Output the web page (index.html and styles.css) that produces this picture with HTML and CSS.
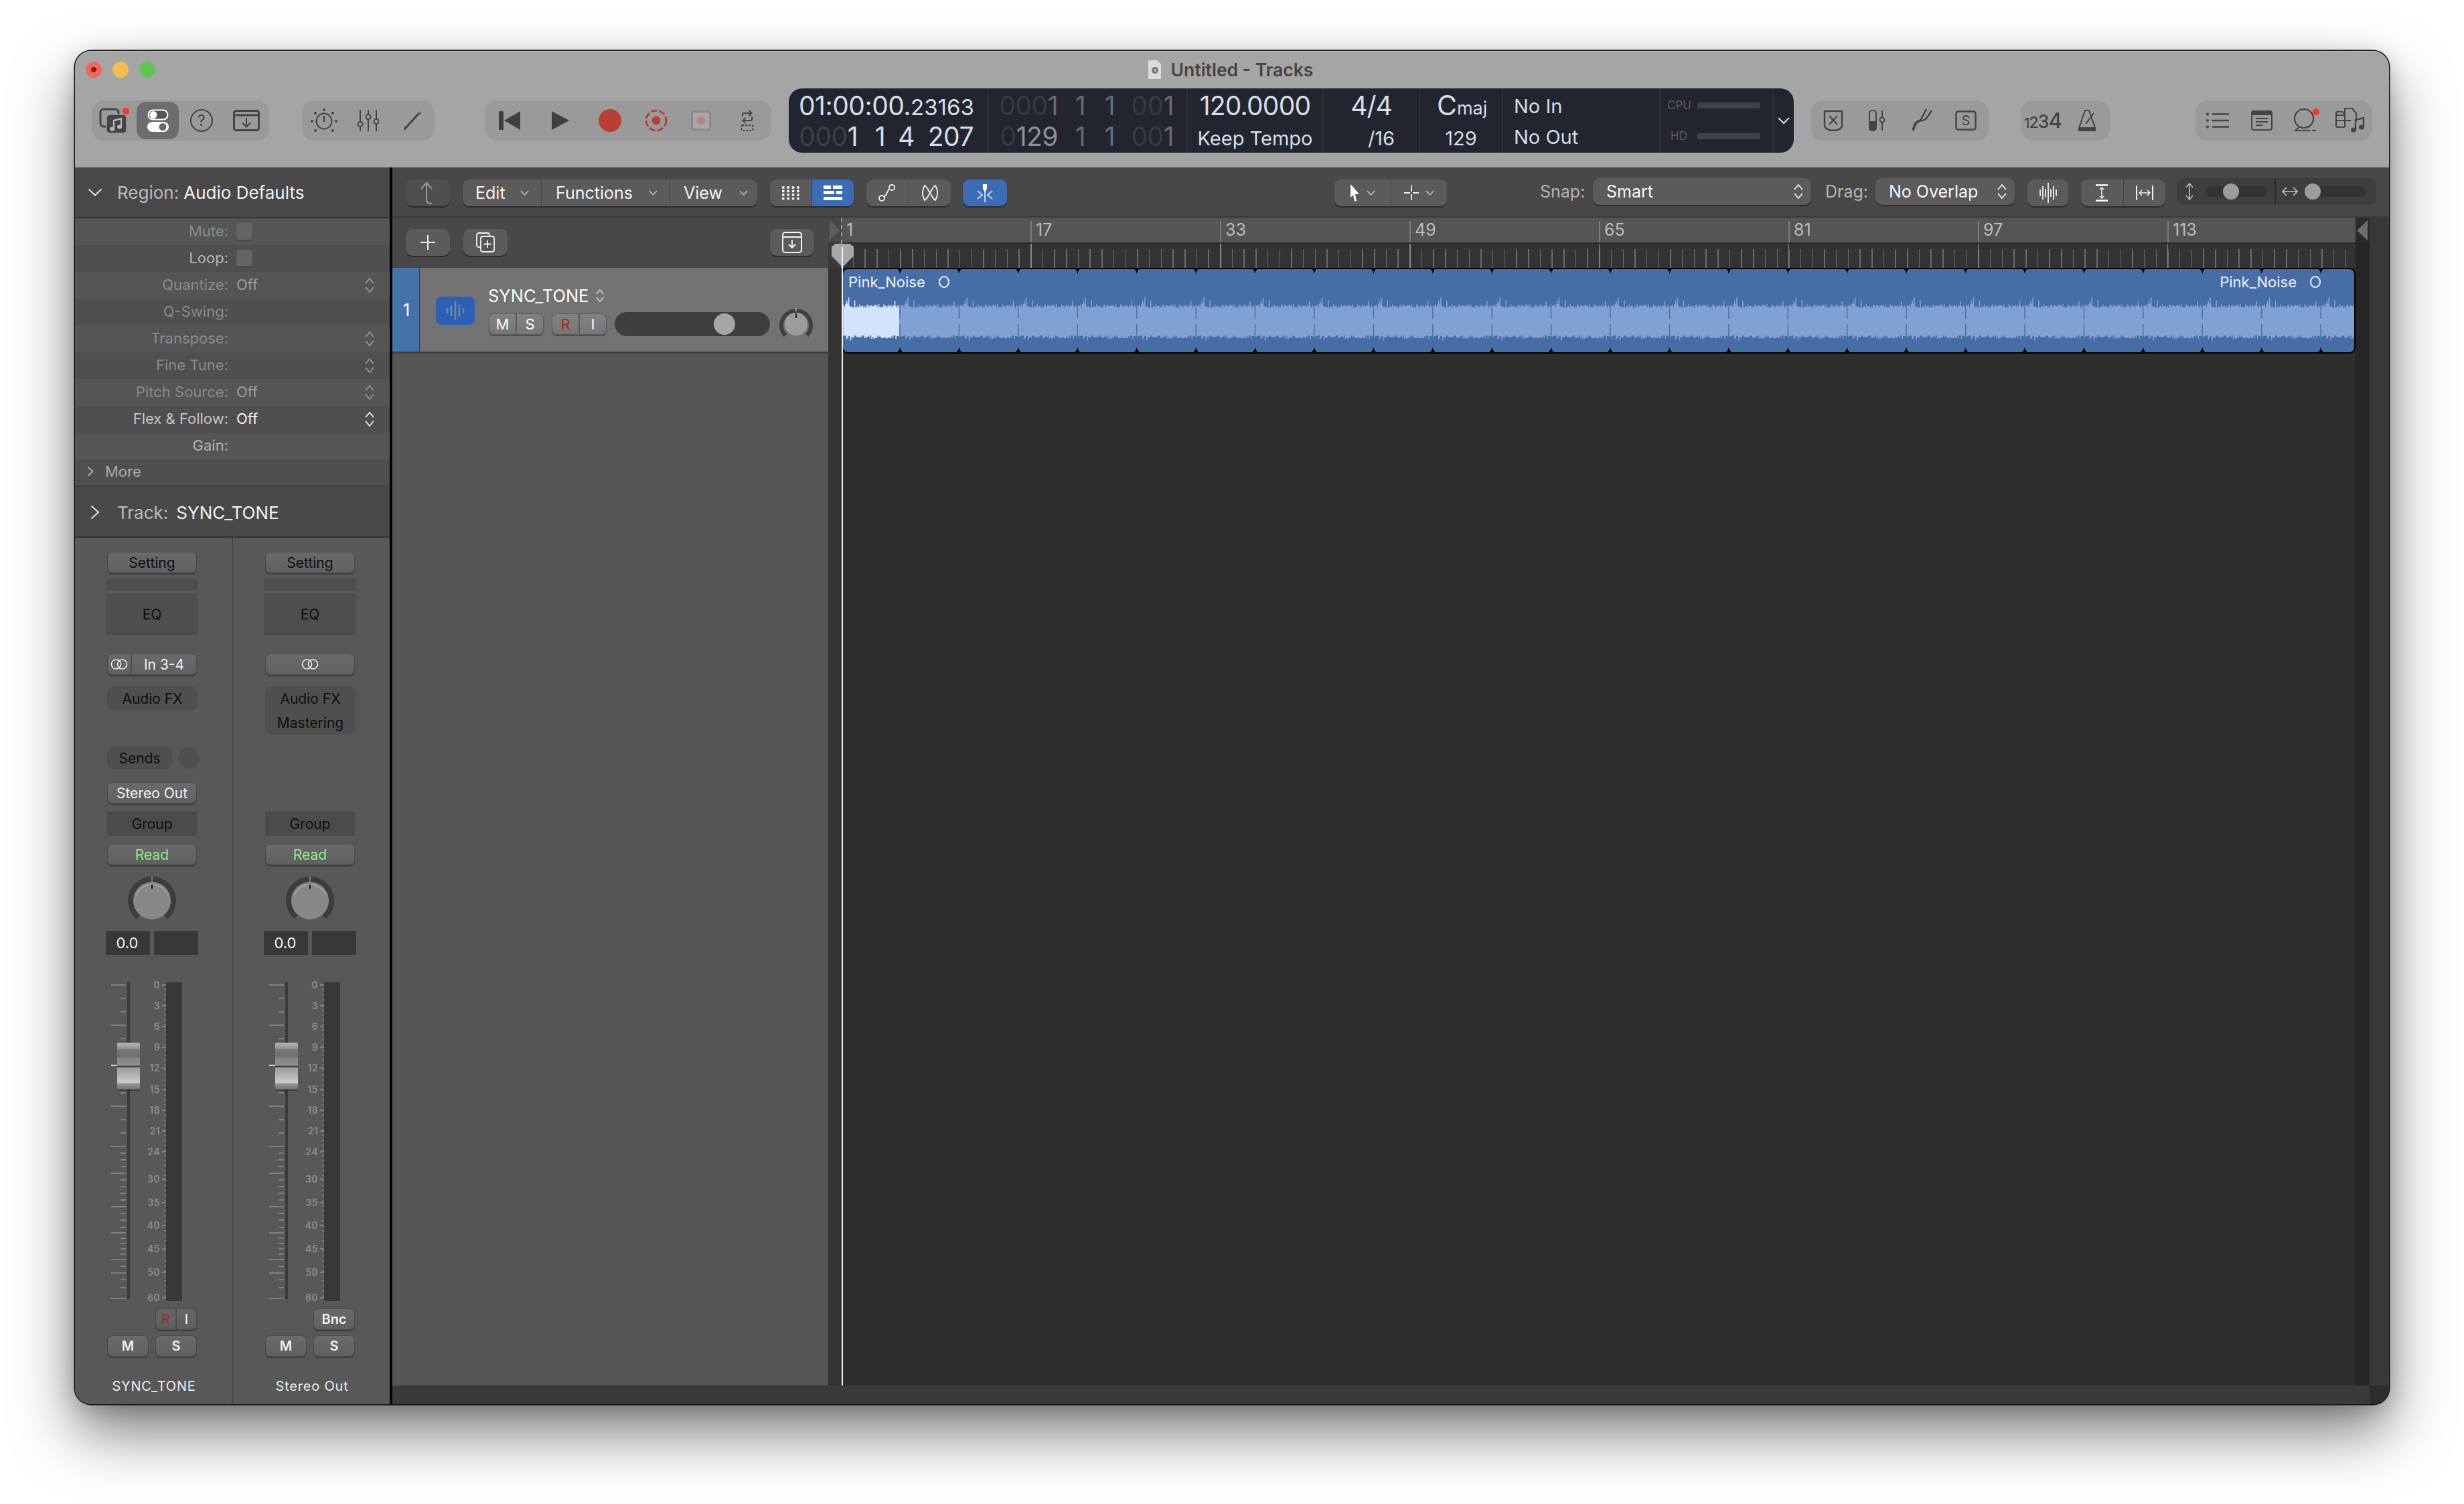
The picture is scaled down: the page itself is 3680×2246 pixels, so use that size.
FILE: index.html
```html
<!DOCTYPE html>
<html lang="en">
<head>
<meta charset="utf-8">
<title>Untitled - Tracks</title>
<link rel="stylesheet" href="styles.css">
</head>
<body>
<svg class="defs" width="0" height="0" aria-hidden="true"><defs>
<linearGradient id="capg" x1="0" y1="0" x2="0" y2="1">
<stop offset="0" stop-color="#b4b6b4"/><stop offset=".14" stop-color="#8e908e"/><stop offset=".15" stop-color="#777"/><stop offset=".3" stop-color="#6f706f"/><stop offset=".31" stop-color="#808180"/><stop offset=".49" stop-color="#8e8f8e"/><stop offset=".5" stop-color="#3a3a3a"/><stop offset=".52" stop-color="#3a3a3a"/><stop offset=".53" stop-color="#9a9b9a"/><stop offset=".82" stop-color="#c6c8c6"/><stop offset=".86" stop-color="#c6c8c6"/><stop offset=".87" stop-color="#999"/><stop offset="1" stop-color="#6f706f"/>
</linearGradient>
</defs></svg>
<main class="window">
  <header class="titlebar">
    <div class="titlerow">
      <div class="lights"><i class="light red"><b></b></i><i class="light yellow"></i><i class="light green"></i></div>
      <div class="wintitle">
        <svg class="docicon" viewBox="0 0 20 28"><path d="M1 0h12l6 6v21a1 1 0 0 1-1 1H1a1 1 0 0 1-1-1V1a1 1 0 0 1 1-1z" fill="#dcdcdc"/><circle cx="10" cy="15" r="5" fill="#777"/><circle cx="10" cy="15" r="2" fill="#bbb"/></svg>
        <span>Untitled - Tracks</span>
      </div>
    </div>
    <div class="toolbar">
      <div class="tgroup g-a">
        <div class="tb"><svg width="46" height="40" viewBox="0 0 46 40"><rect x="2" y="3" width="27" height="26" rx="5" fill="none" stroke="#444" stroke-width="3"/><rect x="11" y="11" width="30" height="28" rx="5" fill="#444" stroke="#9c9c9c" stroke-width="1.5"/><path d="M22 32V20l11-3v12" fill="none" stroke="#b9b9b9" stroke-width="2.4"/><ellipse cx="19.5" cy="32.500" rx="3.500" ry="3" fill="#b9b9b9"/><ellipse cx="30.500" cy="29.500" rx="3.500" ry="3" fill="#b9b9b9"/><circle cx="40" cy="6" r="5" fill="#f2392c"/></svg></div>
        <div class="tb active"><svg width="32" height="34" viewBox="0 0 32 34"><rect x="1.500" y="1.500" width="29" height="14" rx="7" fill="#555" stroke="#fff" stroke-width="2"/><circle cx="9" cy="8.500" r="5.500" fill="#fff"/><rect x="0" y="19" width="32" height="15" rx="7.500" fill="#fff"/><circle cx="23" cy="26.500" r="5.500" fill="#666"/></svg></div>
        <div class="tb"><svg width="34" height="36" viewBox="0 0 34 36"><circle cx="17" cy="18" r="16" fill="none" stroke="#444" stroke-width="2"/><text x="17" y="26" text-anchor="middle" class="qmark">?</text></svg></div>
        <div class="tb"><svg width="40" height="32" viewBox="0 0 40 32"><rect x="1.500" y="1.500" width="37" height="29" rx="3" fill="none" stroke="#444" stroke-width="3"/><path d="M2 8h36" stroke="#444" stroke-width="3"/><path d="M20 12v13M14 19.500l6 6 6-6" fill="none" stroke="#444" stroke-width="2"/></svg></div>
      </div>
      <div class="tgroup g-b">
        <div class="tb"><svg width="42" height="36" viewBox="0 0 42 36"><circle cx="21" cy="19" r="11.500" fill="none" stroke="#444" stroke-width="2"/><path d="M21 11v9" stroke="#444" stroke-width="2.500"/><g fill="#444"><circle cx="21" cy="2" r="2"/><circle cx="8" cy="7" r="2"/><circle cx="34" cy="7" r="2"/><circle cx="3" cy="19" r="2"/><circle cx="39" cy="19" r="2"/><circle cx="8" cy="33" r="2"/><circle cx="34" cy="33" r="2"/></g></svg></div>
        <div class="tb"><svg width="34" height="32" viewBox="0 0 34 32"><path d="M5 0v32M17 0v32M29 0v32" stroke="#444" stroke-width="2"/><g fill="#a0a0a0" stroke="#444" stroke-width="2"><rect x="1.500" y="18" width="7" height="7" rx="3.500"/><rect x="13.500" y="7" width="7" height="7" rx="3.500"/><rect x="25.500" y="14" width="7" height="7" rx="3.500"/></g></svg></div>
        <div class="tb"><svg width="28" height="30" viewBox="0 0 28 30"><path d="M2 28L24 4" stroke="#444" stroke-width="3"/><path d="M1 30l1-5 3 2zM24 4l3-3-1 5z" fill="#444"/></svg></div>
      </div>
      <div class="tgroup g-c">
        <div class="tb"><svg width="32" height="28" viewBox="0 0 32 28"><rect width="7" height="28" rx="1.500" fill="#3f3f3f"/><path d="M32 0v28L8 14z" fill="#3f3f3f"/></svg></div>
        <div class="tb"><svg width="26" height="28" viewBox="0 0 26 28"><path d="M0 0l26 14L0 28z" fill="#3f3f3f"/></svg></div>
        <div class="tb"><svg width="34" height="34" viewBox="0 0 34 34"><circle cx="17" cy="17" r="17" fill="#b83f31"/></svg></div>
        <div class="tb"><svg width="34" height="34" viewBox="0 0 34 34"><circle cx="17" cy="17" r="15" fill="none" stroke="#b83f31" stroke-width="3" stroke-dasharray="9 3.500"/><circle cx="17" cy="17" r="6.500" fill="#b83f31"/></svg></div>
        <div class="tb"><svg width="30" height="30" viewBox="0 0 30 30"><rect x="1.500" y="1.500" width="27" height="27" rx="3" fill="#a8a8a8" stroke="#8a8a8a" stroke-width="3"/><circle cx="15" cy="15" r="6.500" fill="#b88583"/></svg></div>
        <div class="tb"><svg width="20" height="32" viewBox="0 0 20 32"><path d="M3 10V7a2 2 0 0 1 2-2h11M12.500 1l4 4-4 4M17 10v4a2 2 0 0 1-2 2H4M7.500 12l-4 4 4 4" fill="none" stroke="#444" stroke-width="2"/><rect x="1.500" y="23" width="17" height="8" rx="1" fill="none" stroke="#444" stroke-width="2" stroke-dasharray="3 2"/></svg></div>
      </div>
      <div class="lcd">
        <div class="lcell c1">
          <div class="lrow lead">01:00:00.<small>23163</small></div>
          <div class="lrow counter"><span><u>000</u>1</span><span>1</span><span>4</span><span>207</span></div>
        </div>
        <div class="lcell c2">
          <div class="lrow counter mid"><span><u>000</u>1</span><span>1</span><span>1</span><span><u>00</u>1</span></div>
          <div class="lrow counter mid"><span><u>0</u><em>129</em></span><span>1</span><span>1</span><span><u>00</u>1</span></div>
        </div>
        <div class="lcell c3">
          <div class="lrow big center">120.0000</div>
          <div class="lrow sub center">Keep Tempo</div>
        </div>
        <div class="lcell c4">
          <div class="lrow big center">4/4</div>
          <div class="lrow sub center shift">/16</div>
        </div>
        <div class="lcell c5">
          <div class="lrow big key">C<small>maj</small></div>
          <div class="lrow sub center">129</div>
        </div>
        <div class="lcell c6">
          <div class="lrow sub">No In</div>
          <div class="lrow sub">No Out</div>
        </div>
        <div class="lcell c7">
          <div class="lrow perf"><span>CPU</span><i></i></div>
          <div class="lrow perf"><span>HD</span><i></i></div>
        </div>
        <div class="lcell c8"><svg class="chev lcdchev" viewBox="0 0 20 12"><path d="M2 2l8 8 8-8"/></svg></div>
      </div>
      <div class="tgroup g-d">
        <div class="tb"><svg width="30" height="32" viewBox="0 0 30 32"><path d="M2 2h26v21c0 5-6 8-13 8S2 28 2 23z" fill="none" stroke="#444" stroke-width="2.500"/><path d="M9 9l12 13M21 9L9 22" stroke="#444" stroke-width="2"/></svg></div>
        <div class="tb"><svg width="26" height="32" viewBox="0 0 26 32"><rect x="1" y="1" width="10" height="30" rx="4" fill="none" stroke="#444" stroke-width="2"/><path d="M1 17h10v10a4 4 0 0 1-4 4H5a4 4 0 0 1-4-4z" fill="#444"/><path d="M20 1v30" stroke="#444" stroke-width="2"/><circle cx="20" cy="15" r="3.500" fill="#a0a0a0" stroke="#444" stroke-width="2"/></svg></div>
        <div class="tb"><svg width="36" height="36" viewBox="0 0 36 36"><path d="M5 33L8 24c2-4 5-5 8-6" fill="none" stroke="#444" stroke-width="3.500"/><path d="M16 18L25 1M16 18c4 1 9-2 11-6l6-9" fill="none" stroke="#444" stroke-width="2.500"/></svg></div>
        <div class="tb"><svg width="32" height="30" viewBox="0 0 32 30"><rect x="1.500" y="1.500" width="29" height="27" rx="3" fill="none" stroke="#444" stroke-width="2.500"/><text x="16" y="22" text-anchor="middle" class="iconletter">S</text></svg></div>
      </div>
      <div class="tgroup g-e">
        <div class="tb count"><span class="d1">1</span><span class="d2">2</span><span class="d3">3</span><span class="d4">4</span></div>
        <div class="tb"><svg width="32" height="34" viewBox="0 0 32 34"><path d="M13 2h6l9 26H4z" fill="none" stroke="#444" stroke-width="2"/><path d="M3 28h26v5H3z" fill="#444"/><path d="M14 22L26 6" stroke="#444" stroke-width="2"/></svg></div>
      </div>
      <div class="tgroup g-f">
        <div class="tb"><svg width="34" height="24" viewBox="0 0 34 24"><path d="M9 2.500h25M9 12h25M9 21.500h25" stroke="#444" stroke-width="2.500"/><circle cx="2" cy="2.500" r="2" fill="#444"/><circle cx="2" cy="12" r="2" fill="#444"/><circle cx="2" cy="21.500" r="2" fill="#444"/></svg></div>
        <div class="tb"><svg width="32" height="30" viewBox="0 0 32 30"><rect x="1" y="1" width="30" height="28" rx="3" fill="none" stroke="#444" stroke-width="2"/><path d="M1 4a3 3 0 0 1 3-3h24a3 3 0 0 1 3 3v3H1z" fill="#444"/><path d="M7 12h18M7 17h18M7 22h11" stroke="#444" stroke-width="2"/></svg></div>
        <div class="tb loopbtn"><svg width="40" height="36" viewBox="0 0 40 36"><ellipse cx="17" cy="15" rx="14" ry="14" fill="none" stroke="#444" stroke-width="2.200"/><path d="M3 33h32" stroke="#444" stroke-width="2.200" stroke-dasharray="23 3"/><path d="M10 28l-6 5" stroke="#444" stroke-width="2.200"/><circle cx="35" cy="5" r="5" fill="#f2392c"/></svg></div>
        <div class="tb"><svg width="46" height="38" viewBox="0 0 46 38"><path d="M2 11h13M2 8a2 2 0 0 1 2-2h8l3 5v16a2 2 0 0 1-2 2H4a2 2 0 0 1-2-2z" fill="none" stroke="#444" stroke-width="2"/><path d="M15 22V1h11l6 7v12" fill="none" stroke="#444" stroke-width="2"/><path d="M2 19h22" stroke="#444" stroke-width="2"/><path d="M31 32V18l12-3v13" fill="none" stroke="#444" stroke-width="2.500"/><ellipse cx="28" cy="33" rx="4" ry="3.500" fill="#444"/><ellipse cx="40" cy="29" rx="4" ry="3.500" fill="#444"/></svg></div>
      </div>
    </div>
  </header>

  <div class="workspace">
    <aside class="inspector">
      <div class="ihead">
        <svg class="chev ichev" viewBox="0 0 22 12"><path d="M1.500 1.500L11 10.500l9.500-9"/></svg>
        <span class="ilabel">Region:</span><strong>Audio Defaults</strong>
      </div>
      <div class="irows">
        <div class="irow"><label class="dim">Mute:</label><i class="check"></i></div>
        <div class="irow"><label class="mid">Loop:</label><i class="check"></i></div>
        <div class="irow"><label class="dim">Quantize:</label><span class="dimval">Off</span><svg class="step" viewBox="0 0 16 24"><path d="M2 9l6-7 6 7M2 15l6 7 6-7"/></svg></div>
        <div class="irow"><label class="dim">Q-Swing:</label></div>
        <div class="irow"><label class="dim">Transpose:</label><span></span><svg class="step" viewBox="0 0 16 24"><path d="M2 9l6-7 6 7M2 15l6 7 6-7"/></svg></div>
        <div class="irow"><label class="dim">Fine Tune:</label><span></span><svg class="step" viewBox="0 0 16 24"><path d="M2 9l6-7 6 7M2 15l6 7 6-7"/></svg></div>
        <div class="irow"><label class="dim">Pitch Source:</label><span class="dimval">Off</span><svg class="step" viewBox="0 0 16 24"><path d="M2 9l6-7 6 7M2 15l6 7 6-7"/></svg></div>
        <div class="irow"><label class="on">Flex &amp; Follow:</label><span class="onval">Off</span><svg class="step onstep" viewBox="0 0 16 24"><path d="M2 9l6-7 6 7M2 15l6 7 6-7"/></svg></div>
        <div class="irow"><label class="mid">Gain:</label></div>
        <div class="irow more"><svg class="morechev" viewBox="0 0 10 16"><path d="M1.500 1.500L8.500 8l-7 6.500"/></svg><span>More</span></div>
      </div>
      <div class="ihead trackhead">
        <svg class="tchev" viewBox="0 0 14 22"><path d="M1.500 1.500L12 11 1.500 20.500"/></svg>
        <span class="ilabel">Track:</span><strong>SYNC_TONE</strong>
      </div>
      <div class="mixer">
        <section class="strip first">
          <button class="btn setting">Setting</button>
          <div class="eqthin"></div>
          <div class="eq">EQ</div>
          <div class="btn inputbtn"><span class="link"><svg width="26" height="16" viewBox="0 0 26 16"><circle cx="8.500" cy="8" r="7" fill="none" stroke="#eee" stroke-width="1.600"/><circle cx="17.500" cy="8" r="7" fill="none" stroke="#eee" stroke-width="1.600"/></svg></span><span class="inname">In 3-4</span></div>
          <div class="fxslot"><div class="fx"><span>Audio FX</span></div></div>
          <div class="sends"><span class="sendbtn">Sends</span><i class="senddot"></i></div>
          <button class="btn out">Stereo Out</button>
          <div class="group">Group</div>
          <button class="btn read">Read</button>
          <svg class="knob" width="72" height="72" viewBox="0 0 72 72"><path d="M15.400 60.500A32 32 0 1 1 56.600 60.500" fill="none" stroke="#3c3c3c" stroke-width="8"/><circle cx="36" cy="36" r="28" fill="#888"/><path d="M12 28a26 26 0 0 1 48 0" fill="none" stroke="#bdbdbd" stroke-width="1"/><path d="M36 0v8" stroke="#7fdc7a" stroke-width="1"/><path d="M36 12v6" stroke="#111" stroke-width="2"/></svg>
          <div class="vals"><span>0.0</span><span></span></div>
          <svg class="fader" width="138" height="476" viewBox="0 0 138 476"><rect x="32" y="0" width="4" height="473" fill="#3a3a3a"/><path class="tk" d="M8 4h22M8 64h22M8 185h22M8 245h22M8 285h22M8 335h22M8 374h22M8 414h22M8 434h22M8 472h22M22 24h8M22 44h8M22 84h8M22 165h8M22 205h8M22 225h8M22 255h8M22 265h8M22 275h8M22 295h8M22 305h8M22 315h8M22 325h8M22 345h8M22 355h8M22 366h8M22 382h8M22 390h8M22 398h8M22 406h8M22 424h8M22 444h8M22 456h8"/><path class="tk" d="M84 4h6M84 35h6M84 66h6M84 97h6M84 128h6M84 160h6M84 191h6M84 222h6M84 253h6M84 294h6M84 329h6M84 363h6M84 398h6M84 433h6M84 471h6"/><path class="dots" d="M88.500 10V470"/><rect x="90" y="0" width="24" height="476" fill="#383838"/><path d="M8 124h9" stroke="#fff" stroke-width="1.500"/><rect x="17" y="92" width="34" height="70" rx="2" fill="#000" opacity=".3"/><rect x="17" y="90" width="34" height="70" rx="2" fill="url(#capg)"/><g class="sc"><text x="81" y="9">0</text><text x="81" y="40">3</text><text x="81" y="71">6</text><text x="81" y="102">9</text><text x="81" y="133">12</text><text x="81" y="165">15</text><text x="81" y="196">18</text><text x="81" y="227">21</text><text x="81" y="258">24</text><text x="81" y="299">30</text><text x="81" y="334">35</text><text x="81" y="368">40</text><text x="81" y="403">45</text><text x="81" y="438">50</text><text x="81" y="476">60</text></g></svg>
          <div class="ribtn"><div class="seg2 small"><span class="rec">R</span><span>I</span></div></div>
          <div class="msrow"><button class="btn ms">M</button><button class="btn ms">S</button></div>
          <div class="cname">SYNC_TONE</div>
        </section>
        <section class="strip">
          <button class="btn setting">Setting</button>
          <div class="eqthin"></div>
          <div class="eq">EQ</div>
          <div class="btn inputbtn center"><svg width="26" height="16" viewBox="0 0 26 16"><circle cx="8.500" cy="8" r="7" fill="none" stroke="#eee" stroke-width="1.600"/><circle cx="17.500" cy="8" r="7" fill="none" stroke="#eee" stroke-width="1.600"/></svg></div>
          <div class="fxslot"><div class="fx"><span>Audio FX</span><span>Mastering</span></div></div>
          <div class="sends"></div>
          <div class="outgap"></div>
          <div class="group">Group</div>
          <button class="btn read">Read</button>
          <svg class="knob" width="72" height="72" viewBox="0 0 72 72"><path d="M15.400 60.500A32 32 0 1 1 56.600 60.500" fill="none" stroke="#3c3c3c" stroke-width="8"/><circle cx="36" cy="36" r="28" fill="#888"/><path d="M12 28a26 26 0 0 1 48 0" fill="none" stroke="#bdbdbd" stroke-width="1"/><path d="M36 0v8" stroke="#7fdc7a" stroke-width="1"/><path d="M36 12v6" stroke="#111" stroke-width="2"/></svg>
          <div class="vals"><span>0.0</span><span></span></div>
          <svg class="fader" width="138" height="476" viewBox="0 0 138 476"><rect x="32" y="0" width="4" height="473" fill="#3a3a3a"/><path class="tk" d="M8 4h22M8 64h22M8 185h22M8 245h22M8 285h22M8 335h22M8 374h22M8 414h22M8 434h22M8 472h22M22 24h8M22 44h8M22 84h8M22 165h8M22 205h8M22 225h8M22 255h8M22 265h8M22 275h8M22 295h8M22 305h8M22 315h8M22 325h8M22 345h8M22 355h8M22 366h8M22 382h8M22 390h8M22 398h8M22 406h8M22 424h8M22 444h8M22 456h8"/><path class="tk" d="M84 4h6M84 35h6M84 66h6M84 97h6M84 128h6M84 160h6M84 191h6M84 222h6M84 253h6M84 294h6M84 329h6M84 363h6M84 398h6M84 433h6M84 471h6"/><path class="dots" d="M88.500 10V470"/><rect x="90" y="0" width="24" height="476" fill="#383838"/><path d="M8 124h9" stroke="#fff" stroke-width="1.500"/><rect x="17" y="92" width="34" height="70" rx="2" fill="#000" opacity=".3"/><rect x="17" y="90" width="34" height="70" rx="2" fill="url(#capg)"/><g class="sc"><text x="81" y="9">0</text><text x="81" y="40">3</text><text x="81" y="71">6</text><text x="81" y="102">9</text><text x="81" y="133">12</text><text x="81" y="165">15</text><text x="81" y="196">18</text><text x="81" y="227">21</text><text x="81" y="258">24</text><text x="81" y="299">30</text><text x="81" y="334">35</text><text x="81" y="368">40</text><text x="81" y="403">45</text><text x="81" y="438">50</text><text x="81" y="476">60</text></g></svg>
          <div class="ribtn"><button class="btn bnc">Bnc</button></div>
          <div class="msrow"><button class="btn ms">M</button><button class="btn ms">S</button></div>
          <div class="cname">Stereo Out</div>
        </section>
      </div>
    </aside>
    <div class="vdivider"></div>

    <div class="main">
      <div class="maintools">
        <div class="mb back"><svg width="26" height="36" viewBox="0 0 26 36"><path d="M11 3v25c0 4 3 6 8 6" fill="none" stroke="#9a9a9a" stroke-width="2"/><path d="M3 12l8-9 8 9" fill="none" stroke="#9a9a9a" stroke-width="2"/></svg></div>
        <div class="mb menus">
          <div class="cell m-edit"><span>Edit</span><svg class="chev mchev" viewBox="0 0 14 8"><path d="M1 1l6 6 6-6"/></svg></div>
          <div class="cell m-func"><span>Functions</span><svg class="chev mchev" viewBox="0 0 14 8"><path d="M1 1l6 6 6-6"/></svg></div>
          <div class="cell m-view"><span>View</span><svg class="chev mchev" viewBox="0 0 14 8"><path d="M1 1l6 6 6-6"/></svg></div>
        </div>
        <div class="mb seg w125">
          <div class="cell"><svg width="28" height="22" viewBox="0 0 28 22"><path d="M1 3h26M1 8.500h26M1 14h26M1 19.500h26" stroke="#f4f4f4" stroke-width="3.500" stroke-dasharray="3.500 3.900"/></svg></div>
          <div class="cell blue"><svg width="28" height="22" viewBox="0 0 28 22"><g fill="#fff"><rect width="11" height="5"/><rect x="14" width="14" height="5"/><rect y="8" width="16" height="5"/><rect x="19" y="8" width="9" height="5"/><rect y="17" width="28" height="5"/></g></svg></div>
        </div>
        <div class="mb seg w126">
          <div class="cell"><svg width="34" height="26" viewBox="0 0 34 26"><path d="M5 22l6-1c4-3 7-12 10-15l8-2" fill="none" stroke="#f0f0f0" stroke-width="1.800"/><circle cx="24" cy="5" r="4" fill="#555" stroke="#f0f0f0" stroke-width="1.800"/><circle cx="9" cy="21" r="4" fill="#555" stroke="#f0f0f0" stroke-width="1.800"/></svg></div>
          <div class="cell"><svg width="28" height="26" viewBox="0 0 26 26"><path d="M5 2C1 9 1 17 5 24 9 22 10 17 13 13 16 9 17 4 21 2 25 9 25 17 21 24 17 22 16 17 13 13 10 9 9 4 5 2Z" fill="none" stroke="#f0f0f0" stroke-width="1.800"/></svg></div>
        </div>
        <div class="mb blue flexbtn"><svg width="28" height="28" viewBox="0 0 28 28"><path d="M14 1v27" stroke="#fff" stroke-width="1.500"/><path d="M11 1h6v7l-3 5-3-5z" fill="#fff"/><path d="M3 11l7 6-7 6M25 11l-7 6 7 6" fill="none" stroke="#fff" stroke-width="1.500"/></svg></div>
        <div class="mb tools">
          <div class="cell t-a"><svg width="16" height="26" viewBox="0 0 16 26"><path d="M2 0l13 15H9l2 10-3 1-2-10-4 4z" fill="#fff"/></svg><svg class="chev mchev" viewBox="0 0 14 8"><path d="M1 1l6 6 6-6"/></svg></div>
          <div class="cell t-b"><svg width="22" height="22" viewBox="0 0 22 22"><path d="M11 0v9M11 13v9M0 11h9M13 11h9" stroke="#f0f0f0" stroke-width="1.800"/></svg><svg class="chev mchev" viewBox="0 0 14 8"><path d="M1 1l6 6 6-6"/></svg></div>
        </div>
        <span class="flabel snap">Snap:</span>
        <div class="sel s-snap"><span>Smart</span><svg class="step onstep" viewBox="0 0 16 24"><path d="M2 9l6-7 6 7M2 15l6 7 6-7"/></svg></div>
        <span class="flabel drag">Drag:</span>
        <div class="sel s-drag"><span>No Overlap</span><svg class="step onstep" viewBox="0 0 16 24"><path d="M2 9l6-7 6 7M2 15l6 7 6-7"/></svg></div>
        <div class="mb waveb"><svg width="26" height="30" viewBox="0 0 26 30"><path d="M1 10v10M5 5v20M9 9v12M13 0v30M17 9v12M21 5v20M25 10v10" stroke="#f0f0f0" stroke-width="1.800"/></svg></div>
        <div class="mb seg w126">
          <div class="cell"><svg width="20" height="26" viewBox="0 0 20 26"><path d="M1 1.500h18M1 24.500h18" stroke="#fff" stroke-width="2.500"/><path d="M10 5v16M7 8l3-3 3 3M7 18l3 3 3-3" fill="none" stroke="#f0f0f0" stroke-width="1.500"/></svg></div>
          <div class="cell"><svg width="28" height="22" viewBox="0 0 28 22"><path d="M2 0v22M26 0v22" stroke="#f0f0f0" stroke-width="2"/><path d="M7 11h14M10 7l-4 4 4 4M18 7l4 4-4 4" fill="none" stroke="#f0f0f0" stroke-width="1.500"/></svg></div>
        </div>
        <div class="zoomers">
          <div class="zcell zv"><svg width="14" height="26" viewBox="0 0 14 26"><path d="M7 1v24M2 7l5-6 5 6M2 19l5 6 5-6" fill="none" stroke="#bdbdbd" stroke-width="1.600"/></svg><div class="ztrack"><i></i></div></div>
          <div class="zcell zh"><svg width="24" height="16" viewBox="0 0 24 16"><path d="M1 8h22M7 2L1 8l6 6M17 2l6 6-6 6" fill="none" stroke="#bdbdbd" stroke-width="1.600"/></svg><div class="ztrack"><i></i></div></div>
        </div>
      </div>
      <div class="arrange">
        <div class="tracks">
          <div class="trackbar">
            <div class="mb sq"><svg width="24" height="24" viewBox="0 0 24 24"><path d="M12 1v22M1 12h22" stroke="#f0f0f0" stroke-width="2"/></svg></div>
            <div class="mb sq"><svg width="28" height="30" viewBox="0 0 28 30"><rect x="1" y="1" width="19" height="21" rx="3" fill="none" stroke="#f0f0f0" stroke-width="1.800"/><rect x="7" y="6" width="20" height="23" rx="3" fill="#555" stroke="#f0f0f0" stroke-width="1.800"/><path d="M17 12v11M11.500 17.500h11" stroke="#f0f0f0" stroke-width="1.800"/></svg></div>
            <div class="mb sq pushr"><svg width="30" height="32" viewBox="0 0 30 32"><rect x="1" y="1" width="28" height="30" rx="4" fill="none" stroke="#f6f6f6" stroke-width="2"/><path d="M1 8h28" stroke="#f6f6f6" stroke-width="2"/><path d="M15 12v12M10 19l5 5 5-5" fill="none" stroke="#f6f6f6" stroke-width="1.800"/></svg></div>
          </div>
          <div class="trackrow">
            <div class="tnum">1</div>
            <div class="ticon"><svg width="30" height="28" viewBox="0 0 30 28"><path d="M3 10v8M9 6v16M15 0v28M21 5v18M27 10v8" stroke="#7a8797" stroke-width="2.500"/></svg></div>
            <div class="tbody">
              <div class="tname">SYNC_TONE <svg class="step tstep" viewBox="0 0 16 24"><path d="M2 9l6-7 6 7M2 15l6 7 6-7"/></svg></div>
              <div class="tctrl">
                <div class="seg2"><span>M</span><span>S</span></div>
                <div class="seg2"><span class="rec">R</span><span>I</span></div>
                <div class="vol"><i></i></div>
                <svg class="tknob" width="50" height="50" viewBox="0 0 50 50"><path d="M9 42A22 22 0 1 1 41 42" fill="none" stroke="#404040" stroke-width="6"/><circle cx="25" cy="25" r="17" fill="#9d9d9d"/><path d="M25 1v5" stroke="#7fdc7a" stroke-width="1.500"/><path d="M25 9v7" stroke="#111" stroke-width="1.800"/></svg>
              </div>
            </div>
          </div>
        </div>
        <div class="timeline">
          <div class="gutter"><div class="gtop"><i></i></div><div class="gticks"></div></div>
          <div class="content">
            <div class="ruler">
              <span class="bar firstbar">1</span><span class="bar">17</span><span class="bar">33</span><span class="bar">49</span><span class="bar">65</span><span class="bar">81</span><span class="bar">97</span><span class="bar">113</span>
            </div>
            <div class="ticks"></div>
            <div class="region">
              <svg id="wave" class="wave" width="2262" height="127" viewBox="0 0 2262 127"></svg>
              <div class="rlabel"><span>Pink_Noise</span><i></i></div>
              <div class="rlabel"><span>Pink_Noise</span><i></i></div>
            </div>
          </div>
          <div class="endcol"><div class="etop"><i></i></div></div>
          <div class="vscroll"></div>
          <div class="playhead"><div class="phdash"></div><div class="phhead"></div><div class="phline"></div></div>
        </div>
      </div>
      <div class="hscroll"><i></i></div>
    </div>
  </div>
</main>
<script src="script.js"></script>
</body>
</html>
```
FILE: styles.css
```css
* { box-sizing: border-box; }
html, body { margin: 0; padding: 0; }
body {
  width: 3680px; height: 2246px; overflow: hidden; background: #fff;
  padding: 76px 112px 149px;
  font-family: Inter, "Liberation Sans", sans-serif;
  font-size: 22px; color: #eee;
}
.defs { position: absolute; }
button { font: inherit; padding: 0; margin: 0; }
i, u, em { font-style: normal; text-decoration: none; }

.window {
  width: 3456px; height: 2021px; border-radius: 24px; overflow: hidden;
  display: flex; flex-direction: column; background: #555;
  box-shadow: 0 0 0 1.500px #111, 0 42px 90px rgba(0,0,0,.52), 0 8px 30px rgba(0,0,0,.18);
}
/* title bar */
.titlebar { height: 174px; flex: none; background: #a5a5a5; box-shadow: inset 0 1.500px 0 #bdbdbd; }
.titlerow { height: 56px; position: relative; display: flex; align-items: center; justify-content: center; }
.lights { position: absolute; left: 16px; top: 16px; display: flex; gap: 16px; }
.light { width: 24px; height: 24px; border-radius: 50%; display: flex; align-items: center; justify-content: center; }
.light b { width: 8px; height: 8px; border-radius: 50%; background: #8c1f16; }
.red { background: #ee6a5f; } .yellow { background: #f5bd4f; } .green { background: #61c454; }
.wintitle { display: flex; align-items: center; gap: 14px; font-size: 26.500px; font-weight: 600; color: #444; margin-left: -4px; }
.docicon { width: 20px; height: 28px; }

.toolbar { display: flex; align-items: center; height: 96px; padding-left: 25px; }
.tgroup { height: 60px; background: #9a9a9a; border-radius: 18px; display: flex; flex: none; align-items: center; }
.tb { height: 56px; display: flex; align-items: center; justify-content: center; color: #444; border-radius: 14px; flex: none; }
.g-a { width: 265px; margin-right: 49px; } .g-a .tb { width: 66px; }
.g-a .tb:first-child { width: 67px; }
.g-a .tb.active { background: #6d6d6d; width: 63px; }
.g-a .tb:nth-child(3) { width: 68px; }
.g-b { width: 198px; margin-right: 75px; } .g-b .tb { width: 66px; }
.g-c { width: 428px; margin-right: 26px; }
.g-c .tb:nth-child(1) { width: 74px; } .g-c .tb:nth-child(2) { width: 78px; } .g-c .tb:nth-child(3) { width: 70px; }
.g-c .tb:nth-child(4) { width: 68px; } .g-c .tb:nth-child(5) { width: 66px; } .g-c .tb:nth-child(6) { width: 72px; }
.g-d { width: 265px; margin-left: 26px; margin-right: 48px; } .g-d .tb { width: 66px; }
.g-e { width: 133px; margin-right: 128px; } .g-e .tb { width: 66px; }
.g-f { width: 264px; } .g-f .tb { width: 66px; }
.count { align-items: baseline; line-height: 56px; font-weight: 500; letter-spacing: -1px; }
.d1 { font-size: 20px; } .d2 { font-size: 23px; } .d3 { font-size: 27px; } .d4 { font-size: 31px; }
.qmark { font-size: 23px; fill: #444; font-weight: 400; }
.iconletter { font-size: 20px; fill: #444; }

/* LCD */
.lcd { width: 1501px; height: 96px; flex: none; display: flex; background: #22252e; border-radius: 20px; color: #d6deea; overflow: hidden; }
.lcell { height: 100%; padding: 2px 0; border-left: 2px solid #2c2f38; display: flex; flex-direction: column; flex: none; }
.lcell:first-child { border-left: 0; }
.c1 { width: 297px; } .c2 { width: 297px; } .c3 { width: 203px; } .c4 { width: 144px; } .c5 { width: 124px; } .c6 { width: 235px; } .c7 { width: 169px; } .c8 { width: 32px; align-items: center; justify-content: center; }
.lrow { height: 46px; display: flex; align-items: center; white-space: nowrap; }
.lead { padding-left: 15px; font-size: 39px; letter-spacing: -.5px; }
.lead small { font-size: 33px; letter-spacing: 0; padding-top: 5px; }
.counter { display: grid; grid-template-columns: 103px 41px 44px 88px; font-size: 39px; letter-spacing: -.5px; text-align: right; }
.counter u { color: #3a3f49; }
.mid { color: #646a74; } .counter.mid u { color: #353a44; }
.counter em { color: #8b909a; }
.big { font-size: 39px; } .center { justify-content: center; }
.c3 .big { letter-spacing: -.8px; }
.c4 .big { letter-spacing: -1px; }
.sub { font-size: 29px; padding-top: 6px; }
.c6 .sub { padding-left: 16px; padding-top: 2px; }
.shift { padding-left: 30px; }
.key { padding-left: 25px; font-size: 41px; }
.key small { font-size: 27px; padding-top: 8px; }
.perf { padding-left: 10px; gap: 10px; font-size: 17px; color: #575d68; padding-top: 0; }
.perf span { width: 35px; text-align: center; }
.perf i { width: 94px; height: 9px; background: #3d424d; border-radius: 2px; }
.lcdchev { width: 20px; height: 12px; stroke: #d6deea; }

.chev, .step, .morechev, .tchev { fill: none; stroke: currentColor; stroke-width: 2; display: block; flex: none; }

/* Workspace */
.workspace { flex: 1; display: flex; min-height: 0; background: #555; }
.inspector { width: 470px; flex: none; display: flex; flex-direction: column; background: #585858; }
.vdivider { width: 4px; background: #000; flex: none; }
.ihead { height: 76px; background: #494949; border-bottom: 2px solid #333; display: flex; align-items: center; padding-left: 19px; font-size: 26px; flex: none; white-space: nowrap; }
.ihead strong { font-weight: 400; color: #f2f2f2; margin-left: 7px; }
.ilabel { color: #bbb; margin-left: 22px; }
.ichev { width: 22px; height: 12px; stroke: #ddd; }
.irows { flex: none; }
.irow { height: 40px; display: grid; grid-template-columns: 229px 1fr 30px; column-gap: 12px; align-items: center; background: #555; padding: 0 15px 3px 0; font-size: 22px; }
.irow:nth-child(even) { background: #4f4f4f; }
.irow .check { margin-top: 2px; }
.irow .step { margin-top: 3px; }
.irow label { text-align: right; white-space: nowrap; }
.irow .dim { color: #8a8a8a; } .irow .mid { color: #b4b4b4; } .irow .on { color: #c6c6c6; }
.dimval { color: #9d9d9d; } .onval { color: #f2f2f2; }
.step { width: 16px; height: 24px; color: #8d8d8d; justify-self: center; }
.onstep { color: #d5d5d5; }
.check { width: 24px; height: 25px; background: #646464; border-radius: 4px; box-shadow: 0 1px 1px rgba(0,0,0,.4); }
.more { display: flex; padding-left: 18px; gap: 17px; color: #ababab; border-bottom: 2px solid #3f3f3f; height: 41px; }
.morechev { width: 10px; height: 16px; stroke: #ababab; }
.trackhead { height: 76px; padding: 2px 0 0 23px; }
.tchev { width: 14px; height: 22px; stroke: #e4e4e4; }
.trackhead .ilabel { margin-left: 26px; }
.trackhead strong { margin-left: 12px; }

/* Mixer */
.mixer { flex: 1; display: flex; background: #585858; min-height: 0; }
.strip { width: 234px; flex: none; padding: 21px 0 0 48px; display: flex; flex-direction: column; align-items: flex-start; }
.strip.first { width: 236px; border-right: 2px solid #454545; }
.btn { width: 134px; height: 32px; border-radius: 8px; background: linear-gradient(#6a6a6a, #606060); border: 1px solid #4c4c4c; box-shadow: 0 2px 1px rgba(0,0,0,.3); color: #f0f0f0; display: flex; align-items: center; justify-content: center; font-size: 21px; flex: none; }
.setting { color: #0f0f0f; }
.eqthin { width: 138px; height: 18px; margin: 8px 0 0 -2px; background: #4e4e4e; }
.eq { width: 138px; height: 62px; margin: 4px 0 0 -2px; background: #4e4e4e; color: #0c0c0c; display: flex; align-items: center; justify-content: center; font-size: 21px; }
.inputbtn { margin-top: 28px; }
.inputbtn.center { justify-content: center; }
.link { width: 36px; height: 100%; border-right: 2px solid #4c4c4c; display: flex; align-items: center; justify-content: center; flex: none; }
.inname { flex: 1; text-align: center; }
.fxslot { height: 90px; margin-top: 17px; }
.fx { width: 135px; border-radius: 10px; background: #4f4f4f; color: #0e0e0e; font-size: 21px; display: flex; flex-direction: column; }
.fx span { height: 36px; display: flex; align-items: center; justify-content: center; }
.sends { height: 34px; width: 138px; display: flex; justify-content: space-between; align-items: center; margin-bottom: 19px; flex: none; }
.sendbtn { width: 97px; height: 34px; border-radius: 10px; background: #4f4f4f; color: #0e0e0e; display: flex; align-items: center; justify-content: center; font-size: 21px; }
.senddot { width: 32px; height: 32px; border-radius: 50%; background: #4f4f4f; }
.outgap { height: 32px; flex: none; }
.group { width: 134px; height: 36px; margin-top: 12px; background: #4b4b4b; color: #0e0e0e; display: flex; align-items: center; justify-content: center; font-size: 21px; flex: none; }
.read { margin-top: 12px; color: #8fe887; }
.knob { margin: 17px 0 0 31px; flex: none; display: block; }
.vals { width: 138px; margin: 9px 0 0 -2px; display: grid; grid-template-columns: 66px 66px; column-gap: 6px; flex: none; }
.vals span { height: 36px; background: #383838; color: #f2f2f2; display: flex; align-items: center; justify-content: center; font-size: 22px; padding-right: 2px; }
.fader { margin: 41px 0 0 -2px; flex: none; display: block; overflow: visible; }
.tk { stroke: #8d8d8d; stroke-width: 1.500; fill: none; }
.dots { stroke: #8d8d8d; stroke-width: 2; stroke-dasharray: 2 5.500; }
.sc text { font-size: 14px; font-weight: 600; fill: #8c8c8c; text-anchor: end; letter-spacing: .4px; }
.ribtn { height: 32px; margin-top: 11px; width: 134px; display: flex; justify-content: flex-end; flex: none; }
.seg2 { display: flex; height: 32px; width: 82px; border-radius: 8px; background: linear-gradient(#828282, #767676); border: 1px solid #5a5a5a; box-shadow: 0 2px 1px rgba(0,0,0,.3); flex: none; }
.seg2 span { flex: 1; display: flex; align-items: center; justify-content: center; color: #fff; font-size: 22px; line-height: 1; border-right: 2px solid #5a5a5a; }
.seg2 span:last-child { border-right: 0; }
.rec { color: #a62a1c !important; }
.seg2.small { width: 62px; background: linear-gradient(#666, #5e5e5e); border-color: #4a4a4a; }
.seg2.small span { border-color: #4a4a4a; font-size: 20px; }
.bnc { width: 62px; font-size: 20px; font-weight: 600; }
.msrow { display: flex; gap: 10px; margin-top: 8px; flex: none; width: 134px; }
.ms { width: 62px; font-size: 20px; font-weight: 600; }
.cname { width: 236px; margin: 30px 0 0 -48px; height: 28px; line-height: 28px; text-align: center; font-size: 20px; letter-spacing: .8px; color: #ededed; white-space: nowrap; }

/* Main */
.main { flex: 1; min-width: 0; display: flex; flex-direction: column; }
.maintools { height: 75px; flex: none; background: #484848; border-bottom: 2px solid #3a3a3a; padding: 18px 19px 0 20px; display: flex; align-items: flex-start; gap: 19px; }
.mb { height: 40px; flex: none; display: flex; align-items: center; justify-content: center; background: #5b5b5b; border-radius: 10px; box-shadow: 0 2px 1px rgba(0,0,0,.4); overflow: hidden; color: #f2f2f2; }
.mb.blue, .cell.blue { background: #3c6cb5; }
.back { width: 66px; background: #4f4f4f; }
.menus { width: 440px; justify-content: flex-start; font-size: 25px; }
.cell { height: 100%; flex: 1; display: flex; align-items: center; justify-content: center; border-right: 1.500px solid #424242; }
.cell:last-child { border-right: 0; }
.m-edit { flex: none; width: 118px; padding: 0 18px 0 19px; justify-content: space-between; }
.m-func { flex: none; width: 192px; padding: 0 18px 0 21px; justify-content: space-between; }
.m-view { flex: none; width: 130px; padding: 0 14px 0 20px; justify-content: space-between; }
.mchev { width: 13px; height: 8px; stroke: #b4b4b4; }
.w125 { width: 125px; } .w126 { width: 126px; }
.flexbtn { width: 66px; margin-left: -1px; }
.tools { width: 168px; margin-left: auto; }
.t-a, .t-b { gap: 10px; }
.t-a { flex: 84; } .t-b { flex: 84; }
.flabel { color: #b5b5b5; font-size: 25px; line-height: 36px; flex: none; white-space: nowrap; }
.snap { width: 70px; margin-left: 120px; } .drag { width: 65px; margin-left: 2px; }
.sel { height: 40px; margin-top: -2px; background: #5b5b5b; border-radius: 10px; box-shadow: 0 2px 1px rgba(0,0,0,.4); display: flex; align-items: center; justify-content: space-between; flex: none; font-size: 25px; color: #f6f6f6; padding: 0 11px 0 20px; }
.s-snap { width: 326px; margin-left: -10px; } .s-drag { width: 208px; margin-left: -9px; }
.waveb { width: 61px; }
.zoomers { width: 298px; height: 40px; margin-left: -2px; margin-top: -2px; flex: none; background: #3e3e3e; border-radius: 10px; display: flex; }
.zcell { display: flex; align-items: center; height: 100%; }
.zv { width: 148px; padding-left: 12px; gap: 17px; border-right: 2px solid #2c2c2c; }
.zh { flex: 1; padding-left: 9px; gap: 10px; }
.ztrack { width: 92px; height: 16px; background: #333; border-radius: 8px; position: relative; }
.zv .ztrack i { left: 26px; } .zh .ztrack i { left: 0; }
.ztrack i { position: absolute; top: -4px; width: 24px; height: 24px; border-radius: 50%; background: #9c9c9c; }

.arrange { flex: 1; min-height: 0; display: flex; }
.tracks { width: 651px; flex: none; background: #555; }
.trackbar { height: 75px; background: #484848; padding: 17px 21px 0 20px; display: flex; gap: 20px; }
.sq { width: 66px; }
.pushr { margin-left: auto; }
.trackrow { height: 128px; background: #727272; border-bottom: 3px solid #3f3f3f; display: flex; }
.tnum { width: 41px; background: #4672ac; color: #fff; font-size: 26px; display: flex; align-items: center; justify-content: center; border-right: 1px solid #3b3b3b; padding-left: 2px; }
.ticon { width: 58px; height: 42px; margin: 43px 0 0 24px; background: #2d5fb4; border-radius: 8px; display: flex; align-items: center; justify-content: center; flex: none; }
.tbody { margin-left: 20px; flex: 1; }
.tname { height: 68px; padding-top: 14px; display: flex; align-items: center; gap: 10px; font-size: 25.500px; color: #fff; white-space: nowrap; }
.tstep { color: #c8c8c8; width: 14px; height: 21px; }
.tctrl { display: flex; align-items: center; gap: 12px; height: 32px; }
.tctrl .seg2 { margin-left: 1px; }
.tctrl .seg2 + .seg2 { margin-left: 0; }
.vol { width: 232px; height: 36px; background: #3e3e3e; border-radius: 18px; position: relative; flex: none; }
.vol i { position: absolute; left: 148px; top: 2px; width: 32px; height: 32px; border-radius: 50%; background: #a6a6a6; }
.tknob { display: block; margin-left: 2px; flex: none; }

.timeline { flex: 1; display: flex; position: relative; min-width: 0; background: #2e2e2e; }
.gutter { width: 19px; flex: none; background: #333; }
.gtop { height: 37px; background: #484848; position: relative; }
.gtop i { position: absolute; left: 2px; top: 4px; width: 16px; height: 30px; background: #5e5e5e; clip-path: polygon(0 0, 100% 50%, 0 100%); }
.gticks { height: 38px; background: #3a3a3a; }
.content { width: 2262px; flex: none; display: flex; flex-direction: column; }
.ruler { height: 39px; flex: none; background: #555; border-bottom: 2px solid #2a2a2a; display: grid; grid-template-columns: repeat(8, 283px); overflow: hidden; }
.bar { border-left: 2px solid #7c7c7c; margin-top: 5px; padding: 0 0 0 6px; font-size: 25px; color: #bdbdbd; line-height: 26px; }
.firstbar { border-left: 0; padding-left: 8px; }
.ticks { height: 36px; flex: none; background-color: #333;
  background-image: repeating-linear-gradient(90deg, #8a8a8a 0 1.500px, transparent 1.500px 283px), repeating-linear-gradient(90deg, #6a6a6a 0 1.500px, transparent 1.500px 17.690px);
  background-size: 100% 100%, 100% 28px; background-position: 0 0, 0 100%; background-repeat: no-repeat; }
.region { height: 128px; flex: none; margin-left: 1px; background: #466da6; border: 2px solid #000; border-radius: 9px; position: relative; overflow: hidden; display: flex; justify-content: space-between; padding: 0 50px 0 8px; }
.wave { position: absolute; left: -2px; top: -2px; }
.rlabel { position: relative; display: flex; align-items: center; gap: 20px; height: 37px; font-size: 22px; color: #eef3fb; white-space: nowrap; }
.rlabel i { width: 16px; height: 18px; border: 2px solid #eef3fb; border-radius: 50%; }
.endcol { width: 21px; flex: none; background: #252525; }
.etop { height: 37px; position: relative; background: #2a2a2a; }
.etop i { position: absolute; left: 2px; top: 4px; width: 16px; height: 30px; background: #6e6e6e; clip-path: polygon(100% 0, 0 50%, 100% 100%); }
.vscroll { flex: 1; background: #383838; }
.playhead { position: absolute; left: 5px; top: 0; bottom: 0; width: 33px; }
.phdash { position: absolute; left: 14px; top: 0; height: 39px; border-left: 2px dashed #9a9a9a; }
.phhead { position: absolute; left: 0; top: 39px; width: 33px; height: 35px; background: #a8a8a8; clip-path: polygon(18% 0, 82% 0, 100% 12%, 100% 52%, 50% 100%, 0 52%, 0 12%); }
.phline { position: absolute; left: 15px; top: 44px; bottom: 0; width: 2px; background: #f2f2f2; }
.hscroll { height: 28px; flex: none; background: #3a3a3a; display: flex; justify-content: flex-end; }
.hscroll i { width: 29px; background: #2d2d2d; }
```
FILE: script.js
```js
(function () {
  var svg = document.getElementById('wave');
  var W = 2262, P = 88.42, FIRST = 87;
  var seed = 12345;
  function r() { seed = (seed * 16807) % 2147483647; return seed / 2147483647; }
  var step = 1.5, n = Math.ceil(P / step), top = [], bot = [], i;
  for (i = 0; i < n; i++) {
    var a = r(), b = r();
    var t = 60 - r() * 5 - (a > 0.93 ? 5 + r() * 7 : a * a * 2);
    var c = 100 + r() * 5 + (b > 0.93 ? 3 + r() * 4 : b * b * 2);
    top.push(t); bot.push(c);
  }
  var d0 = '', d1 = '', lines = '', notch = '';
  for (var k = 0; k < 27; k++) {
    var s = FIRST + (k - 1) * P;
    for (i = 0; i < n; i++) {
      var x = s + i * step;
      if (x < 3 || x > W - 3) continue;
      var seg = 'M' + x.toFixed(1) + ' ' + top[i].toFixed(1) + 'V' + bot[i].toFixed(1);
      if (k === 0) d0 += seg; else d1 += seg;
    }
    if (k > 0 && s < W - 2) {
      var nx = s.toFixed(1), l = (s - 6).toFixed(1), rr = (s + 6).toFixed(1);
      lines += 'M' + nx + ' 50V76M' + nx + ' 84V108';
      notch += 'M' + l + ' 0Q' + (s - 1).toFixed(1) + ' 2 ' + nx + ' 9Q' + (s + 1).toFixed(1) + ' 2 ' + rr + ' 0Z';
      notch += 'M' + l + ' 127Q' + (s - 1).toFixed(1) + ' 125 ' + nx + ' 118Q' + (s + 1).toFixed(1) + ' 125 ' + rr + ' 127Z';
    }
  }
  svg.innerHTML =
    '<path d="' + d0 + '" stroke="#d3e3fb" stroke-width="1.6" fill="none"/>' +
    '<path d="' + d1 + '" stroke="#7fa1d3" stroke-width="1.6" fill="none"/>' +
    '<path d="' + lines + '" stroke="#4a72ab" stroke-width="1.5" fill="none"/>' +
    '<path d="' + notch + '" fill="#000"/>';
})();
```
